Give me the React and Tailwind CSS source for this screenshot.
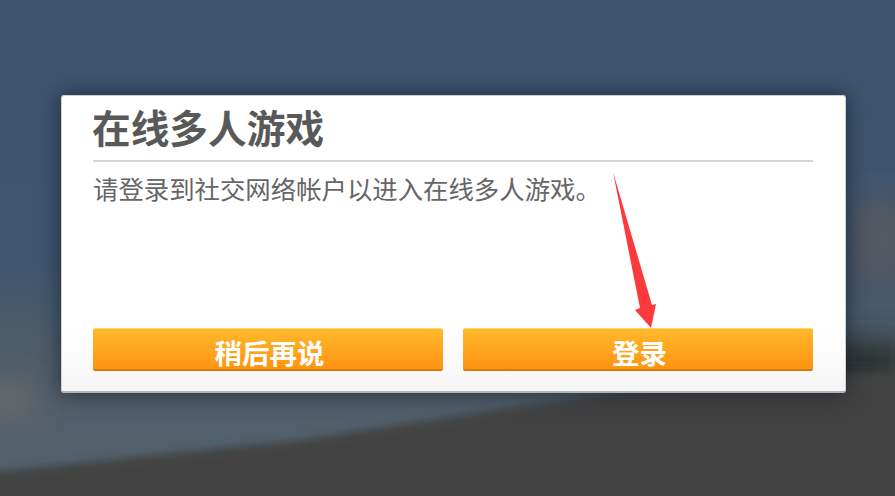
const cjk = "font-['Noto_Sans_CJK_SC','Liberation_Sans',sans-serif]";

const ActionButton = ({ label }) => (
  <button
    type="button"
    className="flex h-[43px] flex-1 items-center justify-center rounded-[2px] border-t border-b-2 border-t-[#ffd070] border-b-[#d97a0c] bg-gradient-to-b from-[#ffb92b] to-[#ff930e] pt-[8px] pl-[3px] text-[27.5px] leading-none font-bold text-white"
  >
    {label}
  </button>
);

// blurred game scene behind the dialog
const Backdrop = () => (
  <svg className="absolute inset-0" width="895" height="496" viewBox="0 0 895 496">
    <defs>
      <filter id="soft" x="-100%" y="-100%" width="300%" height="300%">
        <feGaussianBlur stdDeviation="14" />
      </filter>
      <filter id="edge" x="-5%" y="-20%" width="110%" height="140%">
        <feGaussianBlur stdDeviation="4" />
      </filter>
      <linearGradient id="sky" x1="0" y1="0" x2="0" y2="1">
        <stop offset="0" stopColor="#3e546e" />
        <stop offset="0.52" stopColor="#3f556f" />
        <stop offset="0.68" stopColor="#4d5c69" />
        <stop offset="1" stopColor="#55636f" />
      </linearGradient>
    </defs>
    <rect width="895" height="496" fill="url(#sky)" />
    <ellipse cx="880" cy="240" rx="30" ry="45" fill="#565960" filter="url(#soft)" />
    <ellipse cx="8" cy="400" rx="30" ry="20" fill="#686868" filter="url(#soft)" />
    <rect x="790" y="340" width="115" height="50" fill="#2d3033" filter="url(#soft)" />
    <polygon points="-20,473 300,440 560,400 640,388 915,370 915,516 -20,516" fill="#434343" filter="url(#edge)" />
  </svg>
);

export default function App() {
  return (
    <div className={`relative h-[496px] w-[895px] overflow-hidden bg-[#3e546e] pt-[95px] pl-[61px] ${cjk}`}>
      <Backdrop />

      {/* Dialog */}
      <div className="relative flex h-[298px] w-[785px] flex-col rounded-[3px] border border-[#cfcfcf] border-b-2 border-b-[#b4b4b4] bg-gradient-to-b from-white from-80% to-[#f5f5f5] pr-[31px] pb-[20px] pl-[31px] shadow-[0_0_22px_rgba(15,25,40,0.7)]">
        <h1 className="mr-px border-b-2 border-[#d4d4d4] pt-[7px] pb-[11px] indent-[-1px] text-[38.7px] leading-[46px] font-bold text-[#595959]">
          在线多人游戏
        </h1>
        <p className="pt-[10px] text-[25.4px] leading-[32px] text-[#666666]">
          请登录到社交网络帐户以进入在线多人游戏。
        </p>
        <div className="mt-auto mr-px flex gap-[20px]">
          <ActionButton label="稍后再说" />
          <ActionButton label="登录" />
        </div>
      </div>

      {/* Annotation arrow */}
      <svg className="absolute top-[170px] left-[610px]" width="50" height="160" viewBox="0 0 50 160">
        <polygon points="3,2 42,135 46,134 41,158 25,140 30,138" fill="#fc3a3d" />
      </svg>
    </div>
  );
}
